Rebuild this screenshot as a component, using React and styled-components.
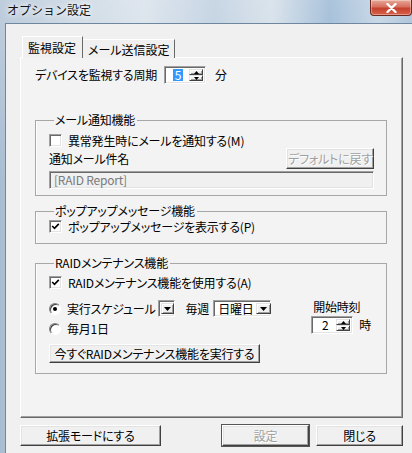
import React from 'react';
import styled, { createGlobalStyle } from 'styled-components';

const GlobalStyle = createGlobalStyle`
  html, body {
    margin: 0;
    padding: 0;
  }
  body {
    font-family: "Noto Sans CJK JP", "Noto Sans", sans-serif;
    font-size: 12px;
    line-height: 14px;
    color: #000;
  }
`;

const Window = styled.div`
  width: 412px;
  height: 453px;
  overflow: hidden;
  display: flex;
  flex-direction: column;
  background:
    linear-gradient(180deg, rgba(255,255,255,0.25) 0%, rgba(255,255,255,0) 40%),
    linear-gradient(90deg, #a9bdd2 0%, #c3d1df 18%, #d4dee8 35%, #b6c9dc 52%, #cfdbe6 66%, #8fb0d0 80%, #b9cde0 92%, #9cb7d2 100%);
`;

const TitleBar = styled.div`
  height: 23px;
  flex-shrink: 0;
  display: flex;
  align-items: flex-start;
`;

const Title = styled.div`
  padding: 3px 0 0 7px;
  font-size: 12px;
  color: #111;
  text-shadow: 0 0 4px #fff, 0 0 8px #fff;
`;

const CloseButton = styled.div`
  margin-left: auto;
  width: 42px;
  height: 16px;
  box-sizing: border-box;
  border: 1px solid #6b2a20;
  border-top: none;
  border-radius: 0 0 4px 4px;
  background: linear-gradient(180deg, #e8a898 0%, #d7705f 45%, #c4412e 55%, #d9624b 100%);
  box-shadow: inset 0 0 0 1px rgba(255,255,255,0.35);
  display: flex;
  align-items: center;
  justify-content: center;
`;

const Client = styled.div`
  flex: 1;
  margin-left: 5px;
  background: #f0f0f0;
  border-top: 1px solid #6e879f;
  border-left: 1px solid #6e879f;
  padding: 12px 8px 0 14px;
  display: flex;
  flex-direction: column;
`;

const TabStrip = styled.div`
  display: flex;
  align-items: flex-end;
  height: 22px;
  margin-bottom: -1px;
  position: relative;
  z-index: 1;
`;

const Tab = styled.div`
  box-sizing: border-box;
  height: ${p => (p.active ? '22px' : '19px')};
  margin-left: ${p => (p.active ? '2px' : '0')};
  padding: ${p => (p.active ? '4px 6px 0 5px' : '3px 4px 0 4px')};
  background: #f0f0f0;
  border: 1px solid;
  border-bottom: none;
  border-color: #fff #696969 transparent #fff;
  border-left-color: ${p => (p.active ? '#fff' : 'transparent')};
  font-feature-settings: "palt";
  white-space: nowrap;
`;

const Panel = styled.div`
  box-sizing: border-box;
  height: 361px;
  margin-right: 1px;
  background: #f3f3f3;
  border: 1px solid;
  border-color: #fff #696969 #696969 #fff;
  box-shadow: inset -1px -1px #a0a0a0;
  padding: 8px 0 0 14px;
  display: flex;
  flex-direction: column;
  font-feature-settings: "palt";
  letter-spacing: -0.2px;
`;

const Row = styled.div`
  display: flex;
  align-items: center;
  white-space: nowrap;
  flex-shrink: 0;
  height: ${p => p.h || 14}px;
  margin-top: ${p => p.mt || 0}px;
`;

const Gap = styled.span`
  flex-shrink: 0;
  width: ${p => p.w}px;
`;

const Spacer = styled.span`
  flex: 1;
`;

const Group = styled.fieldset`
  margin: ${p => p.mt}px 15px 0 0;
  padding: 0 12px ${p => p.pb}px 13px;
  border: 1px solid #a7a7a7;
  box-shadow: inset 1px 0 #fff;
  min-width: 0;
`;

const Legend = styled.legend`
  margin-left: 5px;
  padding: 0 2px 0 1px;
  line-height: 14px;
  height: 14px;
  white-space: nowrap;
`;

const CheckBox = styled.span`
  box-sizing: border-box;
  width: 13px;
  height: 13px;
  flex-shrink: 0;
  margin-right: 6px;
  background: #fff;
  border: 1px solid;
  border-color: #a0a0a0 #fff #fff #a0a0a0;
  box-shadow: inset 1px 1px #696969, inset -1px -1px #e3e3e3;
  display: flex;
  align-items: center;
  justify-content: center;
`;

const Radio = styled.span`
  box-sizing: border-box;
  width: 12px;
  height: 12px;
  flex-shrink: 0;
  margin-right: 6px;
  border-radius: 50%;
  background: #fff;
  border: 1px solid;
  border-color: #808080 #fff #fff #808080;
  box-shadow: inset 1px 1px #404040;
  display: flex;
  align-items: center;
  justify-content: center;
  &::after {
    content: '';
    width: 4px;
    height: 4px;
    border-radius: 50%;
    background: ${p => (p.checked ? '#000' : 'transparent')};
  }
`;

const Sunken = styled.div`
  box-sizing: border-box;
  flex-shrink: 0;
  height: ${p => p.h || 18}px;
  width: ${p => (p.w ? `${p.w}px` : 'auto')};
  flex-grow: ${p => (p.fill ? 1 : 0)};
  background: ${p => (p.disabled ? '#f0f0f0' : '#fff')};
  border: 1px solid;
  border-color: #a0a0a0 #fff #fff #a0a0a0;
  box-shadow: inset 1px 1px #696969, inset -1px -1px #e3e3e3;
  display: flex;
  align-items: stretch;
  padding: 2px;
  color: ${p => (p.disabled ? '#7a7a7a' : '#000')};
`;

const FieldText = styled.span`
  display: flex;
  align-items: center;
  padding: 0 2px;
  white-space: nowrap;
  flex: ${p => (p.grow ? 1 : 'none')};
  justify-content: ${p => (p.center ? 'center' : 'flex-start')};
`;

const Selected = styled.span`
  background: #3399ff;
  color: #fff;
  padding: 0 2px;
  line-height: 12px;
`;

const RaisedBtn = styled.span`
  box-sizing: border-box;
  width: ${p => p.w || 14}px;
  background: #f0f0f0;
  border: 1px solid;
  border-color: #e3e3e3 #404040 #404040 #e3e3e3;
  box-shadow: inset 1px 1px #fff, inset -1px -1px #a0a0a0;
  display: flex;
  align-items: center;
  justify-content: center;
  flex: ${p => (p.half ? 1 : 'none')};
`;

const SpinCol = styled.span`
  display: flex;
  flex-direction: column;
  width: 14px;
`;

const Button = styled.button`
  font: inherit;
  font-feature-settings: "palt";
  letter-spacing: -0.2px;
  white-space: nowrap;
  flex-shrink: 0;
  box-sizing: border-box;
  width: ${p => p.w}px;
  height: ${p => p.h || 21}px;
  padding: 0;
  margin: 0;
  background: #f0f0f0;
  color: ${p => (p.disabled ? '#a0a0a0' : '#000')};
  text-shadow: ${p => (p.disabled ? '1px 1px #fff' : 'none')};
  border: 1px solid;
  border-color: #fff #404040 #404040 #fff;
  box-shadow: ${p =>
    p.isDefault
      ? '0 0 0 1px #555, inset -1px -1px #a0a0a0, inset 1px 1px #e3e3e3'
      : 'inset -1px -1px #a0a0a0, inset 1px 1px #e3e3e3'};
  cursor: default;
`;

const Schedule = styled.div`
  display: flex;
  margin-top: 11px;
`;

const Column = styled.div`
  display: flex;
  flex-direction: column;
  flex-shrink: 0;
  margin-left: ${p => (p.right ? 'auto' : '0')};
  margin-right: ${p => (p.right ? '3px' : '0')};
`;

const StartLabel = styled.div`
  height: 14px;
  margin-left: 2px;
  white-space: nowrap;
`;

const Footer = styled.div`
  display: flex;
  margin-top: 7px;
  margin-right: 1px;
`;

const DownArrow = () => (
  <svg width="7" height="4" viewBox="0 0 7 4">
    <path d="M0 0 H7 L3.5 4 Z" fill="#000" />
  </svg>
);

const SmallArrow = ({ up }) => (
  <svg width="5" height="3" viewBox="0 0 5 3">
    <path d={up ? 'M0 3 H5 L2.5 0 Z' : 'M0 0 H5 L2.5 3 Z'} fill="#000" />
  </svg>
);

const Check = ({ checked }) => (
  <CheckBox>
    {checked && (
      <svg width="9" height="9" viewBox="0 0 9 9">
        <path d="M1.2 4 L3.5 6.3 L7.8 1.8" stroke="#000" strokeWidth="1.7" fill="none" />
      </svg>
    )}
  </CheckBox>
);

const Spinner = ({ value, selected }) => (
  <Sunken w={42} h={18}>
    <FieldText grow center>
      {selected ? <Selected>{value}</Selected> : value}
    </FieldText>
    <SpinCol>
      <RaisedBtn half>
        <SmallArrow up />
      </RaisedBtn>
      <RaisedBtn half>
        <SmallArrow />
      </RaisedBtn>
    </SpinCol>
  </Sunken>
);

const Combo = ({ text, w }) => (
  <Sunken w={w} h={17}>
    {text && <FieldText grow>{text}</FieldText>}
    <RaisedBtn w={text ? 15 : 13}>
      <DownArrow />
    </RaisedBtn>
  </Sunken>
);

export default function App() {
  return (
    <>
      <GlobalStyle />
      <Window>
        <TitleBar>
          <Title>オプション設定</Title>
          <CloseButton>
            <svg width="11" height="10" viewBox="0 0 11 10">
              <path d="M1.5 1 L9.5 9 M9.5 1 L1.5 9" stroke="#fff" strokeWidth="2.4" strokeLinecap="round" />
            </svg>
          </CloseButton>
        </TitleBar>
        <Client>
          <TabStrip>
            <Tab active>監視設定</Tab>
            <Tab>メール送信設定</Tab>
          </TabStrip>
          <Panel>
            <Row h={18}>
              デバイスを監視する周期
              <Gap w={7} />
              <Spinner value="5" selected />
              <Gap w={9} />
              分
            </Row>

            <Group mt={29} pb={6}>
              <Legend>メール通知機能</Legend>
              <Row h={13} mt={7}>
                <Check />
                異常発生時にメールを通知する(M)
              </Row>
              <Row h={21} mt={1}>
                通知メール件名
                <Spacer />
                <Button w={88} disabled>デフォルトに戻す</Button>
              </Row>
              <Row h={18} mt={2}>
                <Sunken h={18} disabled fill>
                  <FieldText>[RAID Report]</FieldText>
                </Sunken>
              </Row>
            </Group>

            <Group mt={8} pb={10}>
              <Legend>ポップアップメッセージ機能</Legend>
              <Row h={13} mt={2}>
                <Check checked />
                ポップアップメッセージを表示する(P)
              </Row>
            </Group>

            <Group mt={12} pb={10}>
              <Legend>RAIDメンテナンス機能</Legend>
              <Row h={13} mt={6}>
                <Check checked />
                RAIDメンテナンス機能を使用する(A)
              </Row>
              <Schedule>
                <Column>
                  <Row h={17}>
                    <Radio checked />
                    実行スケジュール
                    <Gap w={2} />
                    <Combo w={17} />
                    <Gap w={11} />
                    毎週
                    <Gap w={4} />
                    <Combo w={58} text="日曜日" />
                  </Row>
                  <Row h={16} mt={4}>
                    <Radio />
                    毎月1日
                  </Row>
                </Column>
                <Column right>
                  <StartLabel>開始時刻</StartLabel>
                  <Row h={18} mt={2}>
                    <Spinner value="2" />
                    <Gap w={6} />
                    時
                  </Row>
                </Column>
              </Schedule>
              <Row h={19} mt={7}>
                <Button w={211} h={19}>今すぐRAIDメンテナンス機能を実行する</Button>
              </Row>
            </Group>
          </Panel>
          <Footer>
            <Button w={141}>拡張モードにする</Button>
            <Spacer />
            <Button w={87} disabled isDefault>設定</Button>
            <Gap w={7} />
            <Button w={87}>閉じる</Button>
          </Footer>
        </Client>
      </Window>
    </>
  );
}
